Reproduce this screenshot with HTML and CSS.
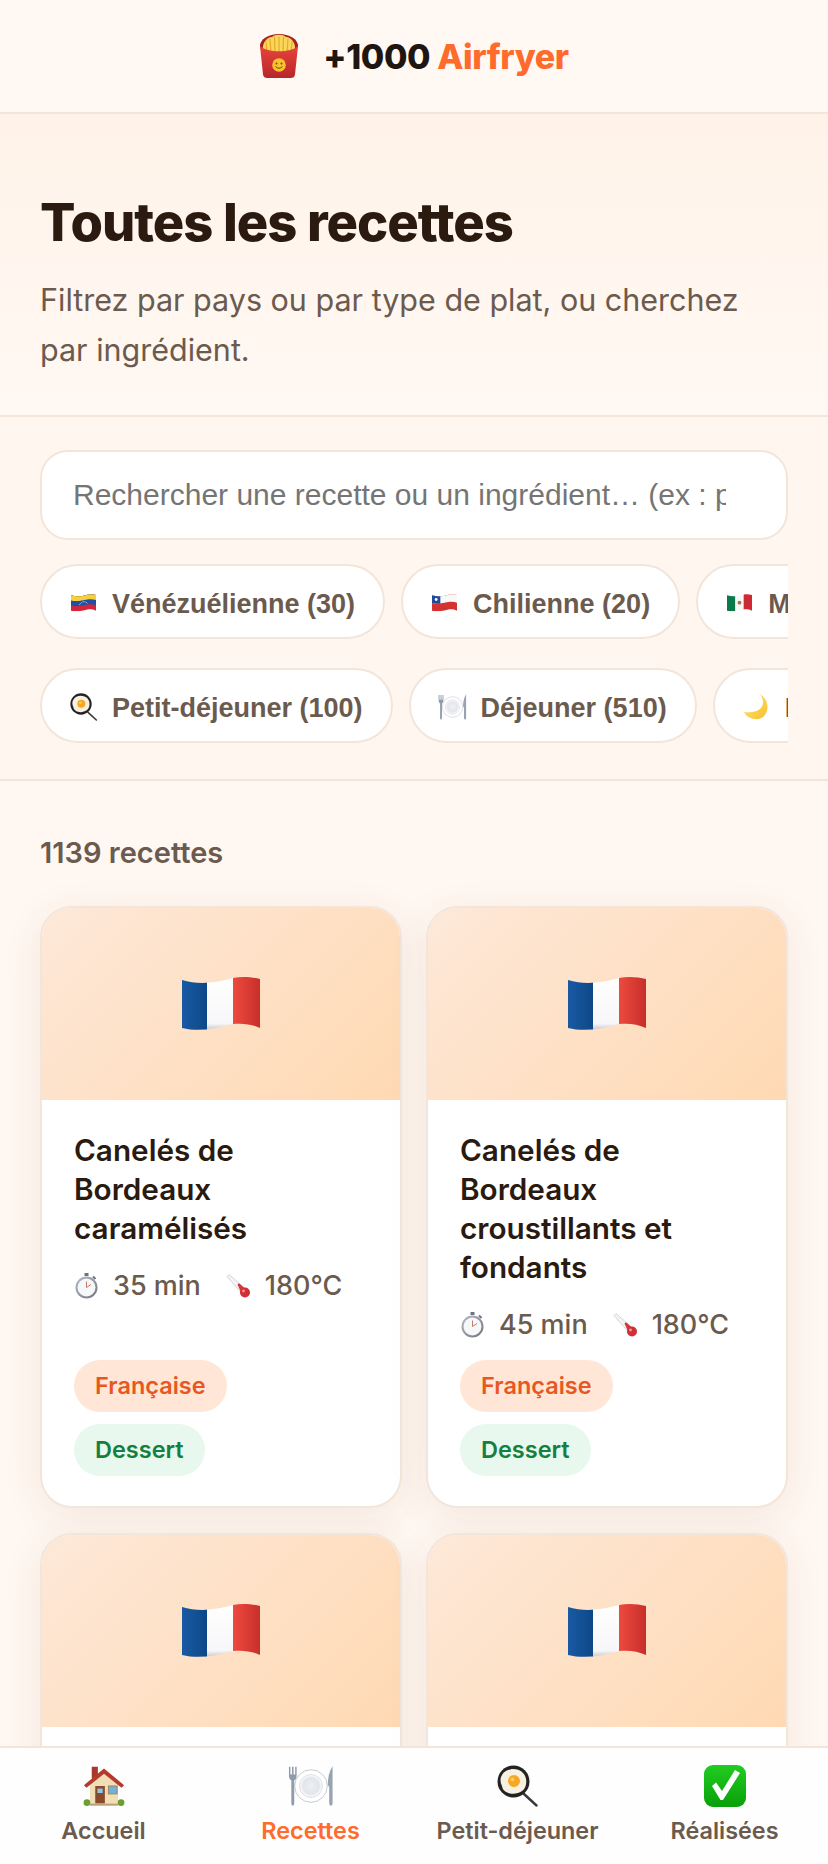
FILE: index.html
```html
<!DOCTYPE html>
<html lang="fr">

<head>
    <meta charset="UTF-8">
    <meta name="viewport" content="width=device-width, initial-scale=1.0">
    <title>Toutes les recettes</title>
    <link rel="stylesheet" href="styles.css">
</head>

<body>
    <!-- les emojis, dessines une fois puis repris avec use -->
    <svg class="sprites" aria-hidden="true">
        <defs>
            <linearGradient id="gBlue" x1="0" x2="1" y1="0" y2="0">
                <stop offset="0" stop-color="#1a5aa3" />
                <stop offset="1" stop-color="#0d4788" />
            </linearGradient>
            <linearGradient id="gWhite" x1="0" x2="0" y1="0" y2="1">
                <stop offset="0" stop-color="#ffffff" />
                <stop offset=".85" stop-color="#f7f7f9" />
                <stop offset="1" stop-color="#b9b9c0" />
            </linearGradient>
            <linearGradient id="gRed" x1="0" x2="1" y1="0" y2="0">
                <stop offset="0" stop-color="#ee4a3f" />
                <stop offset="1" stop-color="#c62f29" />
            </linearGradient>
            <linearGradient id="gBox" x1="0" x2="0" y1="0" y2="1">
                <stop offset="0" stop-color="#e8433c" />
                <stop offset="1" stop-color="#b8262a" />
            </linearGradient>
            <linearGradient id="gCheck" x1="0" x2="0" y1="0" y2="1">
                <stop offset="0" stop-color="#22cc22" />
                <stop offset="1" stop-color="#08a008" />
            </linearGradient>
            <linearGradient id="gMoon" x1="0" x2="1" y1="0" y2="1">
                <stop offset="0" stop-color="#ffe680" />
                <stop offset="1" stop-color="#f6c02c" />
            </linearGradient>
            <linearGradient id="gSilver" x1="0" x2="1" y1="0" y2="1">
                <stop offset="0" stop-color="#b8bcc4" />
                <stop offset="1" stop-color="#6f747e" />
            </linearGradient>
            <radialGradient id="gPlate">
                <stop offset="0" stop-color="#eef0f3" />
                <stop offset=".7" stop-color="#e2e5ea" />
                <stop offset="1" stop-color="#ffffff" />
            </radialGradient>
            <clipPath id="flagClip">
                <path d="M0 4C16 9 34 7 51 2C60 0 70 1 78 3L78 52C70 48 60 47 51 48C34 53 16 56 0 52Z" />
            </clipPath>
        </defs>

        <symbol id="fries" viewBox="0 0 40 44">
            <ellipse cx="20" cy="12" rx="19" ry="12" fill="#a81f22" />
            <path d="M4 16C3 9 8 3 13 3C16 0 24 0 27 3C32 3 37 9 36 16L36 22L4 22Z" fill="#f9d65c" />
            <g stroke="#e9ab26" stroke-width="1.200" stroke-linecap="round">
                <path d="M8 19L7 8M12 20L11 5M16 20L15.500 3M20 20L20 3M24 20L24.500 3M28 20L29 5M32 19L33 8" />
            </g>
            <path d="M1 12C8 19 32 19 39 12L36 40.500Q35.500 44 31.500 44L8.500 44Q4.500 44 4 40.500Z" fill="url(#gBox)" />
            <circle cx="20" cy="31" r="6.800" fill="#f8c32c" />
            <circle cx="17.500" cy="29.500" r="1" fill="#7a4a12" />
            <circle cx="22.500" cy="29.500" r="1" fill="#7a4a12" />
            <path d="M16.500 32.500Q20 36 23.500 32.500" fill="none" stroke="#7a4a12" stroke-width="1" />
        </symbol>

        <symbol id="flag-fr" viewBox="0 0 78 56">
            <g clip-path="url(#flagClip)">
                <rect x="0" y="0" width="25" height="56" fill="url(#gBlue)" />
                <rect x="25" y="0" width="26" height="56" fill="url(#gWhite)" />
                <rect x="51" y="0" width="27" height="56" fill="url(#gRed)" />
            </g>
        </symbol>

        <symbol id="flag-ve" viewBox="0 0 78 56">
            <g clip-path="url(#flagClip)">
                <rect width="78" height="56" fill="#d3263a" />
                <path d="M0 0L78 0L78 35C70 32 60 31 51 33C34 37 16 40 0 36Z" fill="#1f4fa8" />
                <path d="M0 0L78 0L78 19C70 16 60 15 51 17C34 21 16 24 0 20Z" fill="#f7d038" />
                <path d="M26 34Q39 16 52 30" fill="none" stroke="#fff" stroke-width="2.500" stroke-dasharray="3 2" />
            </g>
        </symbol>

        <symbol id="flag-cl" viewBox="0 0 78 56">
            <g clip-path="url(#flagClip)">
                <rect width="78" height="56" fill="#d4322e" />
                <path d="M0 0L78 0L78 27C70 24 60 23 51 25C34 29 16 32 0 28Z" fill="#f8f8f8" />
                <path d="M0 0L26 0L26 30C16 31 8 30 0 28Z" fill="#1f4a9e" />
                <circle cx="13" cy="17" r="4.500" fill="#fff" />
            </g>
        </symbol>

        <symbol id="flag-mx" viewBox="0 0 78 56">
            <g clip-path="url(#flagClip)">
                <rect x="0" y="0" width="26" height="56" fill="#0b7a4b" />
                <rect x="26" y="0" width="26" height="56" fill="#f8f8f8" />
                <rect x="52" y="0" width="26" height="56" fill="#ce2a34" />
                <circle cx="39" cy="27" r="6" fill="#9a7b45" />
            </g>
        </symbol>

        <symbol id="house" viewBox="0 0 48 48">
            <rect x="10" y="2" width="7" height="13" fill="#a8382c" />
            <path d="M8 20L24 7L40 20L40 44L8 44Z" fill="#f2deb4" />
            <path d="M1 23L24 4L47 23L44 26L24 10L4 26Z" fill="#b53a2e" />
            <rect x="14" y="24" width="11" height="20" fill="#8a4a2c" />
            <rect x="16.500" y="27" width="6" height="5" fill="#8cc6e8" />
            <rect x="29" y="24" width="10" height="9" fill="#6fb2de" stroke="#a5875a" stroke-width="1.200" />
            <rect x="8" y="44" width="32" height="2.500" fill="#b8a27c" />
            <circle cx="4.500" cy="43" r="3.800" fill="#6a9e2e" />
            <circle cx="43.500" cy="43" r="3.800" fill="#6a9e2e" />
        </symbol>

        <symbol id="plate" viewBox="0 0 48 42">
            <circle cx="24" cy="21" r="17" fill="#fff" stroke="#b6bcc6" stroke-width=".8" />
            <circle cx="24" cy="21" r="12" fill="url(#gPlate)" stroke="#d2d6dc" stroke-width=".8" />
            <path d="M1 1L1 10Q1 14 3.500 15L3.500 39Q3.500 41.500 5 41.500Q6.500 41.500 6.500 39L6.500 15Q9 14 9 10L9 1L7.500 1L7.500 9L5.800 9L5.800 1L4.200 1L4.200 9L2.500 9L2.500 1Z" fill="#8f9aaa" />
            <path d="M46.500 0Q41.500 8 41.500 20L43 22L43 39Q43 41.500 44.800 41.500Q46.500 41.500 46.500 39Z" fill="#98a3b1" />
        </symbol>

        <symbol id="pan" viewBox="0 0 42 42">
            <path d="M27 29L39.500 40.500" stroke="#3a3a3a" stroke-width="2.400" stroke-linecap="round" />
            <circle cx="16.500" cy="16.500" r="16" fill="#232323" />
            <path d="M5 10C9 2 22 3 26 8C31 13 30 23 25 26C18 31 6 29 5 21C3 17 3 13 5 10Z" fill="#f8f1e2" />
            <circle cx="17" cy="16" r="6" fill="#f7a823" />
            <circle cx="15.500" cy="14.500" r="1.800" fill="#fbd06a" />
        </symbol>

        <symbol id="check" viewBox="0 0 42 42">
            <rect width="42" height="42" rx="9" fill="url(#gCheck)" />
            <path d="M8 21L12 17.500L18 26L31 5L36 8L19 35L16.500 35Z" fill="#fff" />
        </symbol>

        <symbol id="moon" viewBox="0 0 28 26">
            <path d="M18 0C24 8 22 20 2 18C4 23 11 26 17 25C26 23 30 8 18 0Z" fill="url(#gMoon)" />
        </symbol>

        <symbol id="watch" viewBox="0 0 24 26">
            <rect x="10" y="0" width="4" height="3" fill="#6e747e" />
            <path d="M18.500 3.500L21 6" stroke="#6e747e" stroke-width="2" />
            <circle cx="12" cy="14.500" r="11" fill="url(#gSilver)" />
            <circle cx="12" cy="14.500" r="9" fill="#f6f7f9" />
            <path d="M12 8.500L12 14.500L16.500 11.500" fill="none" stroke="#c47a6a" stroke-width="1" />
        </symbol>

        <symbol id="thermo" viewBox="0 0 25 25">
            <path d="M1 3L3 1L19 15L15 19Z" fill="#f3f4f6" stroke="#c9ccd2" stroke-width=".8" />
            <path d="M11.500 11L13 9.800L19 15L15 19Z" fill="#d8353a" />
            <circle cx="19" cy="19" r="5" fill="#cf2f36" />
            <circle cx="17.500" cy="17.500" r="1.400" fill="#f4989a" />
        </symbol>
    </svg>

    <header class="topbar">
        <svg class="logo-icon"><use href="#fries" /></svg>
        <span class="logo-text">+1000 <span class="logo-accent">Airfryer</span></span>
    </header>

    <section class="hero">
        <h1 class="hero-title">Toutes les recettes</h1>
        <p class="hero-sub">Filtrez par pays ou par type de plat, ou cherchez par ingrédient.</p>
    </section>

    <section class="filters">
        <input class="search" type="text" placeholder="Rechercher une recette ou un ingrédient… (ex : poulet)">

        <div class="chip-row">
            <span class="chip"><span class="chip-icon"><svg class="mini-flag"><use href="#flag-ve" /></svg></span>Vénézuélienne (30)</span>
            <span class="chip"><span class="chip-icon"><svg class="mini-flag"><use href="#flag-cl" /></svg></span>Chilienne (20)</span>
            <span class="chip"><span class="chip-icon"><svg class="mini-flag"><use href="#flag-mx" /></svg></span>Mexicaine (19)</span>
        </div>
        <div class="chip-row">
            <span class="chip"><span class="chip-icon"><svg class="chip-pan"><use href="#pan" /></svg></span>Petit-déjeuner (100)</span>
            <span class="chip"><span class="chip-icon"><svg class="chip-plate"><use href="#plate" /></svg></span>Déjeuner (510)</span>
            <span class="chip"><span class="chip-icon"><svg class="chip-moon"><use href="#moon" /></svg></span>Dîner (380)</span>
        </div>
    </section>

    <main class="results">
        <p class="count">1139 recettes</p>

        <div class="grid">
            <article class="card">
                <div class="card-img"><svg class="card-flag"><use href="#flag-fr" /></svg></div>
                <div class="card-body">
                    <h2 class="card-title">Canelés de Bordeaux caramélisés</h2>
                    <div class="meta">
                        <span class="meta-item"><svg class="meta-icon"><use href="#watch" /></svg>35 min</span>
                        <span class="meta-item"><svg class="meta-icon"><use href="#thermo" /></svg>180°C</span>
                    </div>
                    <div class="tags">
                        <span class="tag tag-country">Française</span>
                        <span class="tag tag-type">Dessert</span>
                    </div>
                </div>
            </article>

            <article class="card">
                <div class="card-img"><svg class="card-flag"><use href="#flag-fr" /></svg></div>
                <div class="card-body">
                    <h2 class="card-title">Canelés de Bordeaux croustillants et fondants</h2>
                    <div class="meta">
                        <span class="meta-item"><svg class="meta-icon"><use href="#watch" /></svg>45 min</span>
                        <span class="meta-item"><svg class="meta-icon"><use href="#thermo" /></svg>180°C</span>
                    </div>
                    <div class="tags">
                        <span class="tag tag-country">Française</span>
                        <span class="tag tag-type">Dessert</span>
                    </div>
                </div>
            </article>

            <article class="card">
                <div class="card-img"><svg class="card-flag"><use href="#flag-fr" /></svg></div>
                <div class="card-body card-body-empty"></div>
            </article>

            <article class="card">
                <div class="card-img"><svg class="card-flag"><use href="#flag-fr" /></svg></div>
                <div class="card-body card-body-empty"></div>
            </article>
        </div>
    </main>

    <nav class="tabbar">
        <a class="tab"><svg class="tab-icon"><use href="#house" /></svg>Accueil</a>
        <a class="tab tab-active"><svg class="tab-icon"><use href="#plate" /></svg>Recettes</a>
        <a class="tab"><svg class="tab-icon"><use href="#pan" /></svg>Petit-déjeuner</a>
        <a class="tab"><svg class="tab-icon"><use href="#check" /></svg>Réalisées</a>
    </nav>
</body>

</html>
```

FILE: styles.css
```css
* {
    margin: 0;
    padding: 0;
    box-sizing: border-box;
}

html,
body {
    height: 100%;
    overflow: hidden;
}

body {
    background: #fff7f1;
    color: #2a1a10;
    font-family: Inter, "Liberation Sans", sans-serif;
}

.sprites {
    display: block;
    width: 0;
    height: 0;
}

/* barre du haut */
.topbar {
    display: flex;
    align-items: center;
    justify-content: center;
    gap: 24px;
    height: 114px;
    background: #fff8f3;
    border-bottom: 2px solid #f3e5da;
}

.logo-icon {
    width: 40px;
    height: 44px;
}

.logo-text {
    font-size: 34px;
    font-weight: 800;
    letter-spacing: -0.4px;
    color: #1f1612;
}

.logo-accent {
    color: #ff6b2c;
}

/* titre */
.hero {
    height: 303px;
    padding: 78px 40px 0;
    background: linear-gradient(180deg, #fff3e9 0%, #fff8f3 100%);
    border-bottom: 2px solid #f3e5da;
}

.hero-title {
    font-size: 52.5px;
    line-height: 60px;
    font-weight: 800;
    letter-spacing: -1px;
    color: #2a1a10;
}

.hero-sub {
    margin-top: 23px;
    font-size: 30.5px;
    line-height: 50px;
    color: #6b5a4e;
}

/* recherche et filtres */
.filters {
    display: flex;
    flex-direction: column;
    gap: 24px;
    padding: 33px 40px 36px;
    background: #fef6ef;
    border-bottom: 2px solid #f3e5da;
}

.search {
    width: 100%;
    height: 90px;
    padding: 0 60px 0 31px;
    background: #fff;
    border: 2px solid #f3e5da;
    border-radius: 28px;
    font-family: "Liberation Sans", sans-serif;
    font-size: 30px;
    outline: none;
}

.search::placeholder {
    color: #757575;
}

.chip-row {
    display: flex;
    gap: 16px;
    overflow: hidden;
}

.chip-row + .chip-row {
    margin-top: 5px;
}

.chip {
    display: flex;
    flex-shrink: 0;
    align-items: center;
    gap: 13px;
    height: 75px;
    padding: 6px 28px 0 26px;
    background: #fff;
    border: 2px solid #f3e5da;
    border-radius: 38px;
    font-family: "Liberation Sans", sans-serif;
    font-size: 27px;
    font-weight: 700;
    color: #6b5a4e;
}

.chip-icon {
    display: flex;
    align-items: center;
    justify-content: center;
    width: 31px;
    margin-top: -4px;
}

.mini-flag {
    width: 25px;
    height: 18px;
}

.chip-pan {
    width: 28px;
    height: 28px;
}

.chip-plate {
    width: 29px;
    height: 26px;
}

.chip-moon {
    width: 28px;
    height: 26px;
}

/* liste des recettes */
.results {
    padding: 55px 40px 0;
}

.count {
    margin-bottom: 36px;
    font-size: 29px;
    line-height: 34px;
    font-weight: 600;
    letter-spacing: 0;
    color: #6b5a4e;
}

.grid {
    display: grid;
    grid-template-columns: 1fr 1fr;
    gap: 25px 24px;
}

.card {
    display: flex;
    flex-direction: column;
    overflow: hidden;
    background: #fff;
    border: 2px solid #f3e5da;
    border-radius: 32px;
    box-shadow: 0 8px 40px rgba(120, 70, 30, .08);
}

.card-img {
    display: flex;
    align-items: center;
    justify-content: center;
    height: 192px;
    background: linear-gradient(135deg, #fde8d8 0%, #ffd9b3 100%);
}

.card-flag {
    width: 78px;
    height: 56px;
}

.card-body {
    display: flex;
    flex: 1;
    flex-direction: column;
    padding: 31px 31px 30px 32px;
}

.card-body-empty {
    min-height: 200px;
}

.card-title {
    font-size: 29.7px;
    line-height: 39px;
    font-weight: 600;
    color: #2a1a10;
}

.meta {
    display: flex;
    gap: 25px;
    margin-top: 20px;
    margin-bottom: 17px;
    font-size: 27px;
    line-height: 36px;
    font-weight: 500;
    color: #6b5a4e;
}

.meta-item {
    display: flex;
    align-items: center;
    gap: 14px;
}

.meta-icon {
    width: 25px;
    height: 26px;
}

.tags {
    display: flex;
    flex-direction: column;
    align-items: flex-start;
    gap: 12px;
    margin-top: auto;
}

.tag {
    padding: 0 21px;
    border-radius: 26px;
    font-size: 23.5px;
    line-height: 52px;
    font-weight: 600;
}

.tag-country {
    background: #ffe6d6;
    color: #e8571f;
}

.tag-type {
    background: #e8f8ee;
    color: #15803d;
}

/* barre d'onglets */
.tabbar {
    position: fixed;
    left: 0;
    right: 0;
    bottom: 0;
    display: grid;
    grid-template-columns: repeat(4, 1fr);
    height: 118px;
    padding-top: 17px;
    background: #fefefe;
    border-top: 2px solid #f3e5da;
}

.tab {
    display: flex;
    flex-direction: column;
    align-items: center;
    gap: 10px;
    font-size: 23.4px;
    line-height: 28px;
    font-weight: 600;
    color: #6b5a4e;
}

.tab-active {
    color: #ff6b2c;
}

.tab-icon {
    width: 46px;
    height: 42px;
}
```
